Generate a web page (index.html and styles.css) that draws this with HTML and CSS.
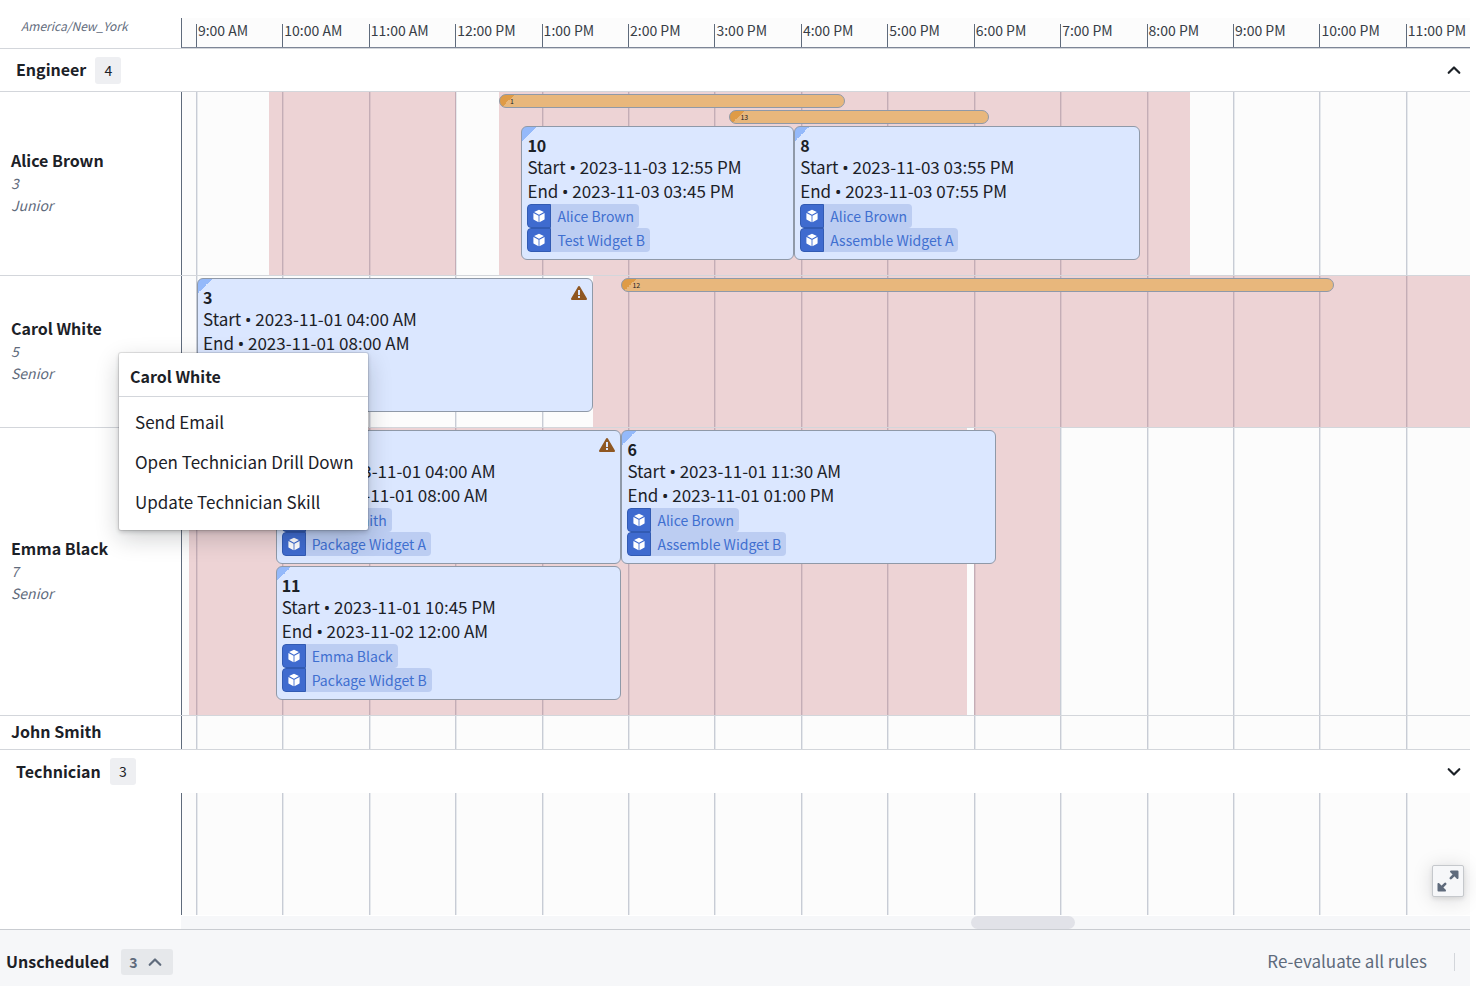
FILE: index.html
```html
<!DOCTYPE html>
<html lang="en">
<head>
<meta charset="utf-8">
<title>Technician schedule</title>
<link rel="stylesheet" href="styles.css">
</head>
<body>
<svg class="sprite" aria-hidden="true">
  <symbol id="cube" viewBox="0 0 16 16">
    <path fill="#fff" d="M8 .8 13.6 3.5 8 6.600 2.400 3.500zM1.600 4.500 7.500 7.700V15L2.200 12.300a1 1 0 0 1-.6-.9zM14.400 4.500 8.500 7.700V15l5.300-2.700a1 1 0 0 0 .6-.9z"/>
  </symbol>
  <symbol id="warning" viewBox="0 0 16 14">
    <path fill="#8f5722" d="M8 0a1 1 0 0 1 .9.500l7 12A1 1 0 0 1 15 14H1a1 1 0 0 1-.9-1.500l7-12A1 1 0 0 1 8 0z"/>
    <path fill="#dbe7ff" d="M7 4h2v5H7zM7 10h2v2H7z"/>
  </symbol>
  <symbol id="chevron-up" viewBox="0 0 14 10">
    <path fill="none" stroke="currentColor" stroke-width="2.200" stroke-linecap="round" stroke-linejoin="round" d="M1.700 7.800 7 2.500l5.300 5.300"/>
  </symbol>
  <symbol id="chevron-down" viewBox="0 0 14 10">
    <path fill="none" stroke="currentColor" stroke-width="2.200" stroke-linecap="round" stroke-linejoin="round" d="M1.700 2.200 7 7.500l5.300-5.300"/>
  </symbol>
  <symbol id="expand" viewBox="0 0 22 22">
    <path fill="none" stroke="currentColor" stroke-width="2.600" stroke-linecap="round" d="M13.800 8.200 18.500 3.500M8.200 13.800 3.500 18.500"/>
    <path fill="currentColor" d="M14 .5h6.500a1 1 0 0 1 1 1V8a1 1 0 0 1-1.700.7L13.300 2.200A1 1 0 0 1 14 .5zM8 21.500H1.500a1 1 0 0 1-1-1V14a1 1 0 0 1 1.700-.7l6.500 6.500a1 1 0 0 1-.7 1.700z"/>
  </symbol>
</svg>

<header class="axis">
  <div class="axis-zone">America/New_York</div>
  <div class="axis-hours">
    <span class="hour" style="--t:0">9:00 AM</span>
    <span class="hour" style="--t:1">10:00 AM</span>
    <span class="hour" style="--t:2">11:00 AM</span>
    <span class="hour" style="--t:3">12:00 PM</span>
    <span class="hour" style="--t:4">1:00 PM</span>
    <span class="hour" style="--t:5">2:00 PM</span>
    <span class="hour" style="--t:6">3:00 PM</span>
    <span class="hour" style="--t:7">4:00 PM</span>
    <span class="hour" style="--t:8">5:00 PM</span>
    <span class="hour" style="--t:9">6:00 PM</span>
    <span class="hour" style="--t:10">7:00 PM</span>
    <span class="hour" style="--t:11">8:00 PM</span>
    <span class="hour" style="--t:12">9:00 PM</span>
    <span class="hour" style="--t:13">10:00 PM</span>
    <span class="hour" style="--t:14">11:00 PM</span>
  </div>
</header>

<main class="board">
  <div class="lines" aria-hidden="true">
    <i class="line" style="--t:0"></i><i class="line" style="--t:1"></i><i class="line" style="--t:2"></i>
    <i class="line" style="--t:3"></i><i class="line" style="--t:4"></i><i class="line" style="--t:5"></i>
    <i class="line" style="--t:6"></i><i class="line" style="--t:7"></i><i class="line" style="--t:8"></i>
    <i class="line" style="--t:9"></i><i class="line" style="--t:10"></i><i class="line" style="--t:11"></i>
    <i class="line" style="--t:12"></i><i class="line" style="--t:13"></i><i class="line" style="--t:14"></i>
  </div>

  <div class="group">
    <h2 class="group-name">Engineer</h2>
    <span class="count">4</span>
    <button class="toggle" aria-label="Collapse Engineer"><svg class="chevron"><use href="#chevron-up"/></svg></button>
  </div>

  <section class="row">
    <div class="person">
      <h3 class="person-name">Alice Brown</h3>
      <p class="person-info">3</p>
      <p class="person-info">Junior</p>
    </div>
    <div class="track">
      <div class="blocked" style="--t:.85;--d:2.155"></div>
      <div class="blocked" style="--t:3.506;--d:8"></div>
      <div class="lane"><div class="bar" style="--t:3.506;--d:4">1</div></div>
      <div class="lane"><div class="bar" style="--t:6.173;--d:3">13</div></div>
      <div class="lane">
        <article class="event" style="--t:3.766;--d:3.157">
          <h4 class="event-id">10</h4>
          <p class="event-time">Start <span class="dot">•</span> 2023-11-03 12:55 PM</p>
          <p class="event-time">End <span class="dot">•</span> 2023-11-03 03:45 PM</p>
          <a class="tag" href="#"><svg class="tag-icon"><use href="#cube"/></svg><span class="tag-label">Alice Brown</span></a>
          <a class="tag" href="#"><svg class="tag-icon"><use href="#cube"/></svg><span class="tag-label">Test Widget B</span></a>
        </article>
        <article class="event" style="--t:6.923;--d:4">
          <h4 class="event-id">8</h4>
          <p class="event-time">Start <span class="dot">•</span> 2023-11-03 03:55 PM</p>
          <p class="event-time">End <span class="dot">•</span> 2023-11-03 07:55 PM</p>
          <a class="tag" href="#"><svg class="tag-icon"><use href="#cube"/></svg><span class="tag-label">Alice Brown</span></a>
          <a class="tag" href="#"><svg class="tag-icon"><use href="#cube"/></svg><span class="tag-label">Assemble Widget A</span></a>
        </article>
      </div>
    </div>
  </section>

  <section class="row">
    <div class="person">
      <h3 class="person-name">Carol White</h3>
      <p class="person-info">5</p>
      <p class="person-info">Senior</p>
    </div>
    <div class="track">
      <div class="blocked" style="--t:4.596;--d:12"></div>
      <div class="lane">
        <article class="event" style="--t:.013;--d:4.583">
          <h4 class="event-id">3</h4>
          <p class="event-time">Start <span class="dot">•</span> 2023-11-01 04:00 AM</p>
          <p class="event-time">End <span class="dot">•</span> 2023-11-01 08:00 AM</p>
          <svg class="warning"><use href="#warning"/></svg>
        </article>
        <div class="bar" style="--t:4.923;--d:8.25">12</div>
      </div>
    </div>
    <div class="menu" role="menu" aria-label="Carol White">
      <h4 class="menu-title">Carol White</h4>
      <div class="menu-items">
        <button class="menu-item" role="menuitem">Send Email</button>
        <button class="menu-item" role="menuitem">Open Technician Drill Down</button>
        <button class="menu-item" role="menuitem">Update Technician Skill</button>
      </div>
    </div>
  </section>

  <section class="row">
    <div class="person">
      <h3 class="person-name">Emma Black</h3>
      <p class="person-info">7</p>
      <p class="person-info">Senior</p>
    </div>
    <div class="track">
      <div class="blocked" style="--t:-.077;--d:9"></div>
      <div class="blocked" style="--t:9;--d:1"></div>
      <div class="lane">
        <article class="event" style="--t:.923;--d:4">
          <h4 class="event-id">&nbsp;</h4>
          <p class="event-time">Start <span class="dot">•</span> 2023-11-01 04:00 AM</p>
          <p class="event-time">End <span class="dot">•</span> 2023-11-01 08:00 AM</p>
          <a class="tag" href="#"><svg class="tag-icon"><use href="#cube"/></svg><span class="tag-label">John Smith</span></a>
          <a class="tag" href="#"><svg class="tag-icon"><use href="#cube"/></svg><span class="tag-label">Package Widget A</span></a>
          <svg class="warning"><use href="#warning"/></svg>
        </article>
        <article class="event" style="--t:4.923;--d:4.34">
          <h4 class="event-id">6</h4>
          <p class="event-time">Start <span class="dot">•</span> 2023-11-01 11:30 AM</p>
          <p class="event-time">End <span class="dot">•</span> 2023-11-01 01:00 PM</p>
          <a class="tag" href="#"><svg class="tag-icon"><use href="#cube"/></svg><span class="tag-label">Alice Brown</span></a>
          <a class="tag" href="#"><svg class="tag-icon"><use href="#cube"/></svg><span class="tag-label">Assemble Widget B</span></a>
        </article>
      </div>
      <div class="lane">
        <article class="event" style="--t:.923;--d:4">
          <h4 class="event-id">11</h4>
          <p class="event-time">Start <span class="dot">•</span> 2023-11-01 10:45 PM</p>
          <p class="event-time">End <span class="dot">•</span> 2023-11-02 12:00 AM</p>
          <a class="tag" href="#"><svg class="tag-icon"><use href="#cube"/></svg><span class="tag-label">Emma Black</span></a>
          <a class="tag" href="#"><svg class="tag-icon"><use href="#cube"/></svg><span class="tag-label">Package Widget B</span></a>
        </article>
      </div>
    </div>
  </section>

  <section class="row">
    <div class="person">
      <h3 class="person-name">John Smith</h3>
    </div>
    <div class="track"></div>
  </section>

  <div class="group group-closed">
    <h2 class="group-name">Technician</h2>
    <span class="count">3</span>
    <button class="toggle" aria-label="Expand Technician"><svg class="chevron"><use href="#chevron-down"/></svg></button>
  </div>

  <div class="rest">
    <button class="expand" aria-label="Full screen"><svg class="expand-icon"><use href="#expand"/></svg></button>
  </div>
</main>

<div class="scroll"><div class="scroll-rail"><div class="scroll-thumb" style="--t:8.97;--d:1.21"></div></div></div>

<footer class="footer">
  <h2 class="footer-title">Unscheduled</h2>
  <button class="footer-count" aria-label="Show 3 unscheduled">3<svg class="chevron"><use href="#chevron-up"/></svg></button>
  <button class="footer-action">Re-evaluate all rules</button>
  <span class="footer-rule"></span>
</footer>
</body>
</html>
```
FILE: styles.css
```css
* { box-sizing: border-box; }

:root {
  --side: 181px;
  --hour: 6.71%;
  --lead: 1.08%;
  --ink: #1c2127;
  --muted: #5f6b7c;
  --rule: #d3d6db;
}

body {
  margin: 0;
  padding: 18px 6px 4px 0;
  min-height: 100vh;
  display: flex;
  flex-direction: column;
  background: #fff;
  color: var(--ink);
  font-family: "Noto Sans CJK SC", "Noto Sans", sans-serif;
  font-size: 16px;
  line-height: 24px;
}

h2, h3, h4, p { margin: 0; font-size: 16px; }
h2, h3, h4 { font-weight: 600; }
button { font: inherit; color: inherit; border: 0; background: none; padding: 0; }
svg { display: block; }
.sprite { position: absolute; width: 0; height: 0; }

/* time axis */
.axis {
  display: grid;
  grid-template-columns: var(--side) 1fr;
  border-bottom: 1px solid var(--rule);
}
.axis-zone {
  padding-left: 21px;
  font-size: 12px;
  line-height: 16px;
  font-style: italic;
  color: var(--muted);
}
.axis-hours {
  position: relative;
  height: 30px;
  background: #fcfcfc;
  border-left: 1px solid var(--muted);
  border-bottom: 1px solid #7d8696;
}
.hour {
  position: absolute;
  left: calc(var(--lead) + var(--t) * var(--hour));
  top: 6px;
  bottom: 0;
  padding-left: 1px;
  border-left: 1px solid var(--muted);
  font-size: 14px;
  line-height: 12px;
  white-space: nowrap;
  color: #383e47;
}

/* board */
.board {
  flex: 1;
  position: relative;
  display: flex;
  flex-direction: column;
}
.lines {
  position: absolute;
  inset: 0 0 1px var(--side);
  background: #fcfcfc;
  border-left: 1px solid var(--muted);
}
.line {
  position: absolute;
  left: calc(var(--lead) + var(--t) * var(--hour));
  top: 0;
  bottom: 0;
  width: 2px;
  border-left: 1px solid #c8ccd5;
  background: #e6e9ed;
}

.group {
  position: relative;
  display: flex;
  align-items: center;
  gap: 9px;
  height: 43px;
  padding: 0 9px 0 16px;
  background: #fff;
  border-bottom: 1px solid var(--rule);
}
.group-name, .footer-title, .footer-action { padding-bottom: 2px; }
.group-closed { border-bottom: 0; }
.count {
  padding: 0 8px;
  border-radius: 3px;
  background: #eeeff2;
  font-size: 14px;
  line-height: 27px;
  min-width: 26px;
  text-align: center;
}
.toggle { margin-left: auto; }
.chevron { width: 14px; height: 10px; }

.row {
  position: relative;
  display: grid;
  grid-template-columns: var(--side) 1fr;
  border-bottom: 1px solid var(--rule);
}
.person {
  display: flex;
  flex-direction: column;
  justify-content: center;
  padding: 0 0 3px 11px;
  background: #fff;
}
.person-info {
  font-size: 14px;
  line-height: 22px;
  font-style: italic;
  color: var(--muted);
}
.track {
  position: relative;
  display: flex;
  flex-direction: column;
  gap: 2px;
  min-height: 33px;
  padding: 2px 0 15px;
  margin-left: 1px;
  overflow: hidden;
}
.blocked {
  position: absolute;
  top: 0;
  bottom: 0;
  left: calc(var(--lead) + var(--t) * var(--hour));
  width: calc(var(--d) * var(--hour));
  background: rgba(180, 50, 60, .2);
}
.lane {
  position: relative;
  display: grid;
  align-items: start;
}
.bar, .event {
  grid-area: 1 / 1;
  margin-left: calc(var(--lead) + var(--t) * var(--hour));
  width: calc(var(--d) * var(--hour));
  border: 1px solid #8f99a8;
}
.bar {
  height: 14px;
  padding-left: 10px;
  border-radius: 7px;
  background: linear-gradient(135deg, #df9b46 50%, transparent 50%) 0 0 / 14px 14px no-repeat #e8b77c;
  font-size: 7px;
  line-height: 13px;
}
.event {
  position: relative;
  display: flex;
  flex-direction: column;
  align-items: flex-start;
  min-height: 134px;
  padding: 8px 5px 7px;
  border-radius: 6px;
  background: linear-gradient(135deg, #94b9fa 50%, transparent 50%) 0 0 / 14px 14px no-repeat #dbe7ff;
  white-space: nowrap;
}
.event-id { line-height: 20px; font-weight: 700; }
.event-time { font-size: 17px; }
.event-time + .tag { margin-top: 1px; }
.dot { font-family: "Noto Sans", sans-serif; line-height: 1; }
.tag {
  display: flex;
  height: 24px;
  border-radius: 4px;
  overflow: hidden;
  background: #bccdf2;
  color: #3f6fd0;
  font-size: 14px;
  text-decoration: none;
}
.tag-icon {
  width: 24px;
  height: 24px;
  padding: 4px;
  background: #3f6bcf;
  border: 1px solid #325bb3;
  border-radius: 4px 0 0 4px;
}
.tag-label { padding: 0 5px 0 6px; }
.warning {
  position: absolute;
  top: 7px;
  right: 5px;
  width: 16px;
  height: 14px;
}

/* context menu */
.menu {
  position: absolute;
  z-index: 2;
  left: 119px;
  top: 77px;
  background: #fff;
  border-radius: 2px;
  box-shadow: 0 0 0 1px rgba(17, 20, 24, .1), 0 2px 4px rgba(17, 20, 24, .2), 0 8px 24px rgba(17, 20, 24, .2);
}
.menu-title {
  padding: 11px 11px 8px;
  border-bottom: 1px solid var(--rule);
}
.menu-items {
  display: flex;
  flex-direction: column;
  padding: 5px 0 8px;
}
.menu-item {
  padding: 8px 14px 8px 16px;
  font-size: 17px;
  text-align: left;
  white-space: nowrap;
}

.rest {
  position: relative;
  flex: 1;
  min-height: 100px;
}
.expand {
  position: absolute;
  right: 6px;
  bottom: 19px;
  display: grid;
  place-items: center;
  width: 32px;
  height: 32px;
  border: 1px solid #c5c8cc;
  border-radius: 2px;
  background: #f6f7f9;
  color: var(--muted);
  box-shadow: 0 2px 4px rgba(17, 20, 24, .1), 0 2px 20px rgba(17, 20, 24, .15);
}
.expand-icon { width: 22px; height: 22px; }

.scroll { padding-left: var(--side); }
.scroll-rail {
  position: relative;
  height: 13px;
  background: #f6f7f9;
}
.scroll-thumb {
  height: 13px;
  margin-left: calc(var(--lead) + var(--t) * var(--hour));
  width: calc(var(--d) * var(--hour));
  border-radius: 7px;
  background: #e1e2e8;
}

/* footer */
.footer {
  display: flex;
  align-items: center;
  height: 57px;
  padding: 7px 15px 0 6px;
  border-top: 1px solid #c9ccd1;
  background: #f6f7f9;
}
.footer-count {
  display: flex;
  align-items: center;
  gap: 10px;
  height: 26px;
  margin-left: 12px;
  padding: 0 11px 0 8px;
  border-radius: 3px;
  background: #e6e8eb;
  color: var(--muted);
  font-size: 14px;
  font-weight: 600;
}
.footer-action {
  margin-left: auto;
  font-size: 17px;
  color: var(--muted);
}
.footer-rule {
  width: 1px;
  height: 18px;
  margin-left: 27px;
  background: #d3d6db;
}
```
